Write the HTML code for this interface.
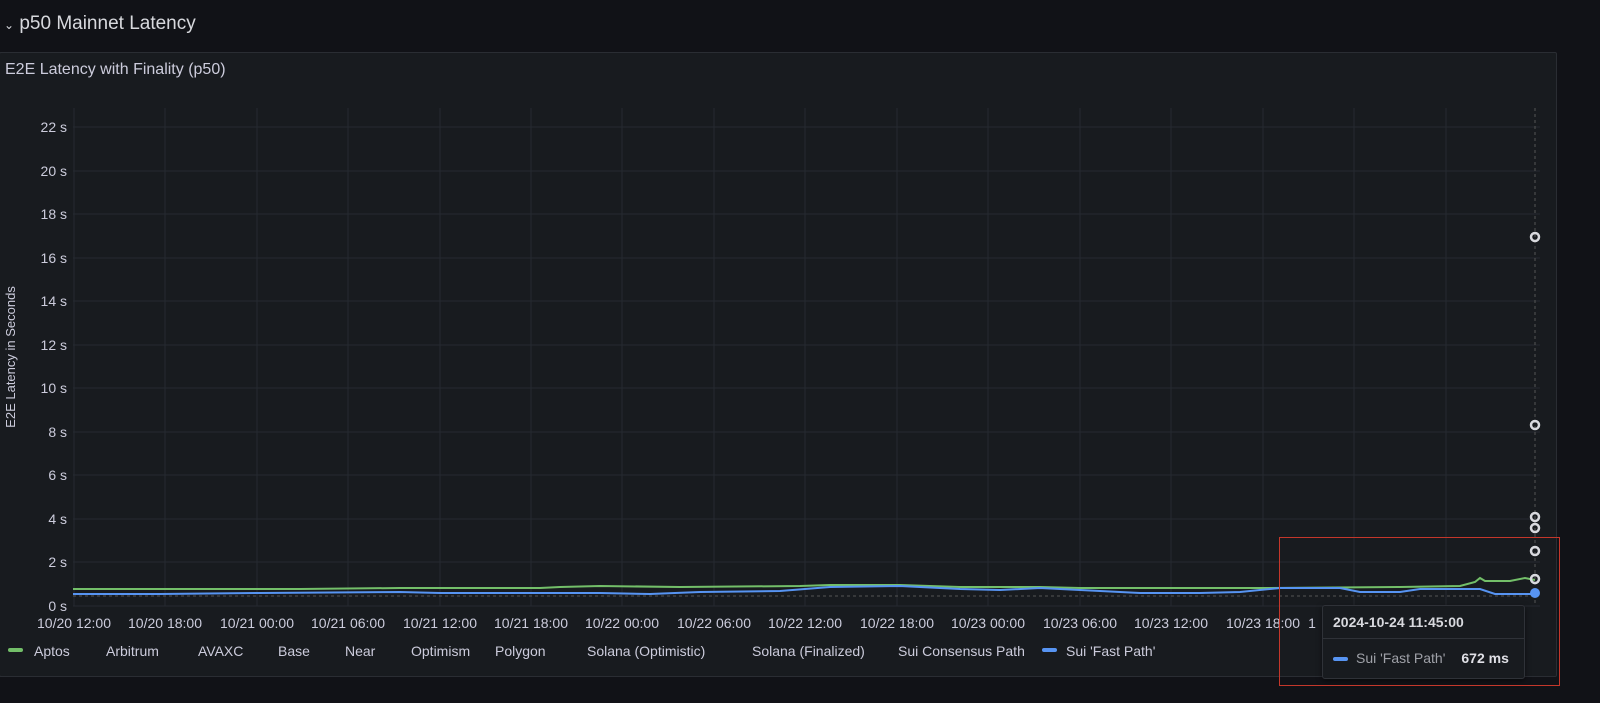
<!DOCTYPE html>
<html><head><meta charset="utf-8"><style>
html,body{margin:0;padding:0;background:#111217;width:1600px;height:703px;overflow:hidden;font-family:"Liberation Sans",sans-serif;}
.hdr{position:absolute;left:4px;top:13px;color:#d8d9de;font-size:19px;}
.panel{position:absolute;left:-1px;top:52px;width:1556px;height:623px;background:#181b1f;border:1px solid #2a2d33;border-radius:2px;}
.title{position:absolute;left:5px;top:61px;color:#ccccdc;font-size:16px;}
svg{position:absolute;left:0;top:0;}
.tt{position:absolute;left:1322px;top:605px;width:201px;height:72px;background:#181b1f;border:1px solid #2f3238;border-radius:3px;box-shadow:0 2px 6px rgba(0,0,0,.5);}
.tt .a{height:32px;line-height:32px;padding-left:10px;color:#d8d9de;font-size:14px;font-weight:bold;border-bottom:1px solid #2f3238;}
.tt .b{height:39px;line-height:39px;padding-left:10px;font-size:14px;color:#9fa1a8;white-space:nowrap;}
.red{position:absolute;left:1279px;top:537px;width:279px;height:147px;border:1.5px solid #c4372b;}
</style></head><body>
<div class="hdr"><span style="font-size:12px">⌄</span> p50 Mainnet Latency</div>
<div class="panel"></div>
<div class="title">E2E Latency with Finality (p50)</div>
<svg width="1600" height="703" font-family="Liberation Sans, sans-serif" font-size="14" fill="#ccccdc">
<g stroke="#262930" stroke-width="1">
<line x1="73" y1="127" x2="1540" y2="127"/><line x1="73" y1="171" x2="1540" y2="171"/><line x1="73" y1="214" x2="1540" y2="214"/><line x1="73" y1="258" x2="1540" y2="258"/><line x1="73" y1="301" x2="1540" y2="301"/><line x1="73" y1="345" x2="1540" y2="345"/><line x1="73" y1="388" x2="1540" y2="388"/><line x1="73" y1="432" x2="1540" y2="432"/><line x1="73" y1="475" x2="1540" y2="475"/><line x1="73" y1="519" x2="1540" y2="519"/><line x1="73" y1="562" x2="1540" y2="562"/><line x1="73" y1="606" x2="1540" y2="606"/>
<line x1="74" y1="108" x2="74" y2="606"/><line x1="165" y1="108" x2="165" y2="606"/><line x1="257" y1="108" x2="257" y2="606"/><line x1="348" y1="108" x2="348" y2="606"/><line x1="440" y1="108" x2="440" y2="606"/><line x1="531" y1="108" x2="531" y2="606"/><line x1="622" y1="108" x2="622" y2="606"/><line x1="714" y1="108" x2="714" y2="606"/><line x1="805" y1="108" x2="805" y2="606"/><line x1="897" y1="108" x2="897" y2="606"/><line x1="988" y1="108" x2="988" y2="606"/><line x1="1080" y1="108" x2="1080" y2="606"/><line x1="1171" y1="108" x2="1171" y2="606"/><line x1="1263" y1="108" x2="1263" y2="606"/><line x1="1354" y1="108" x2="1354" y2="606"/><line x1="1446" y1="108" x2="1446" y2="606"/>
</g>
<line x1="1535" y1="108" x2="1535" y2="606" stroke="#555" stroke-dasharray="3,3"/>
<line x1="73" y1="596" x2="1535" y2="596" stroke="#555" stroke-dasharray="3,3"/>
<g text-anchor="end">
<text x="67" y="132">22 s</text><text x="67" y="176">20 s</text><text x="67" y="219">18 s</text><text x="67" y="263">16 s</text><text x="67" y="306">14 s</text><text x="67" y="350">12 s</text><text x="67" y="393">10 s</text><text x="67" y="437">8 s</text><text x="67" y="480">6 s</text><text x="67" y="524">4 s</text><text x="67" y="567">2 s</text><text x="67" y="611">0 s</text>
</g>
<text transform="translate(15,357) rotate(-90)" text-anchor="middle" font-size="13">E2E Latency in Seconds</text>
<g text-anchor="middle">
<text x="74" y="628">10/20 12:00</text><text x="165" y="628">10/20 18:00</text><text x="257" y="628">10/21 00:00</text><text x="348" y="628">10/21 06:00</text><text x="440" y="628">10/21 12:00</text><text x="531" y="628">10/21 18:00</text><text x="622" y="628">10/22 00:00</text><text x="714" y="628">10/22 06:00</text><text x="805" y="628">10/22 12:00</text><text x="897" y="628">10/22 18:00</text><text x="988" y="628">10/23 00:00</text><text x="1080" y="628">10/23 06:00</text><text x="1171" y="628">10/23 12:00</text><text x="1263" y="628">10/23 18:00</text><text x="1312" y="628">1</text>
</g>
<polyline fill="none" stroke="#73bf69" stroke-width="2" points="73,589 300,589 400,588 540,588 560,587 600,586 680,587 800,586 830,585 900,585 960,587 1000,587 1040,587 1080,588 1160,588 1270,588 1400,587 1460,586 1475,582 1480,578 1485,581 1510,581 1525,578 1535,580"/>
<polyline fill="none" stroke="#5794f2" stroke-width="2" points="73,594 160,594 260,593 400,592 440,593 600,593 650,594 700,592 780,591 830,587 900,586 960,589 1000,590 1040,588 1100,591 1140,593 1200,593 1240,592 1280,588 1340,588 1360,592 1400,592 1420,589 1480,589 1495,594 1535,594"/>
<g fill="none" stroke="#d8d9de" stroke-width="2.5">
<circle cx="1535" cy="237" r="4"/><circle cx="1535" cy="425" r="4"/><circle cx="1535" cy="517" r="4"/><circle cx="1535" cy="528" r="4"/><circle cx="1535" cy="551" r="4"/><circle cx="1535" cy="579" r="4"/>
</g>
<circle cx="1535" cy="593" r="5" fill="#5794f2"/>
<rect x="8" y="648" width="15" height="4" rx="2" fill="#73bf69"/>
<text x="34" y="656">Aptos</text><text x="106" y="656">Arbitrum</text><text x="198" y="656">AVAXC</text><text x="278" y="656">Base</text><text x="345" y="656">Near</text><text x="411" y="656">Optimism</text><text x="495" y="656">Polygon</text><text x="587" y="656">Solana (Optimistic)</text><text x="752" y="656">Solana (Finalized)</text><text x="898" y="656">Sui Consensus Path</text>
<rect x="1042" y="648" width="15" height="4" rx="2" fill="#5794f2"/><text x="1066" y="656">Sui 'Fast Path'</text>
</svg>
<div class="tt"><div class="a">2024-10-24 11:45:00</div><div class="b"><span style="display:inline-block;width:15px;height:4px;border-radius:2px;background:#5794f2;vertical-align:middle;margin-right:8px"></span>Sui 'Fast Path'<span style="color:#e0e0e6;font-weight:bold;margin-left:16px">672 ms</span></div></div>
<div class="red"></div>
</body></html>
